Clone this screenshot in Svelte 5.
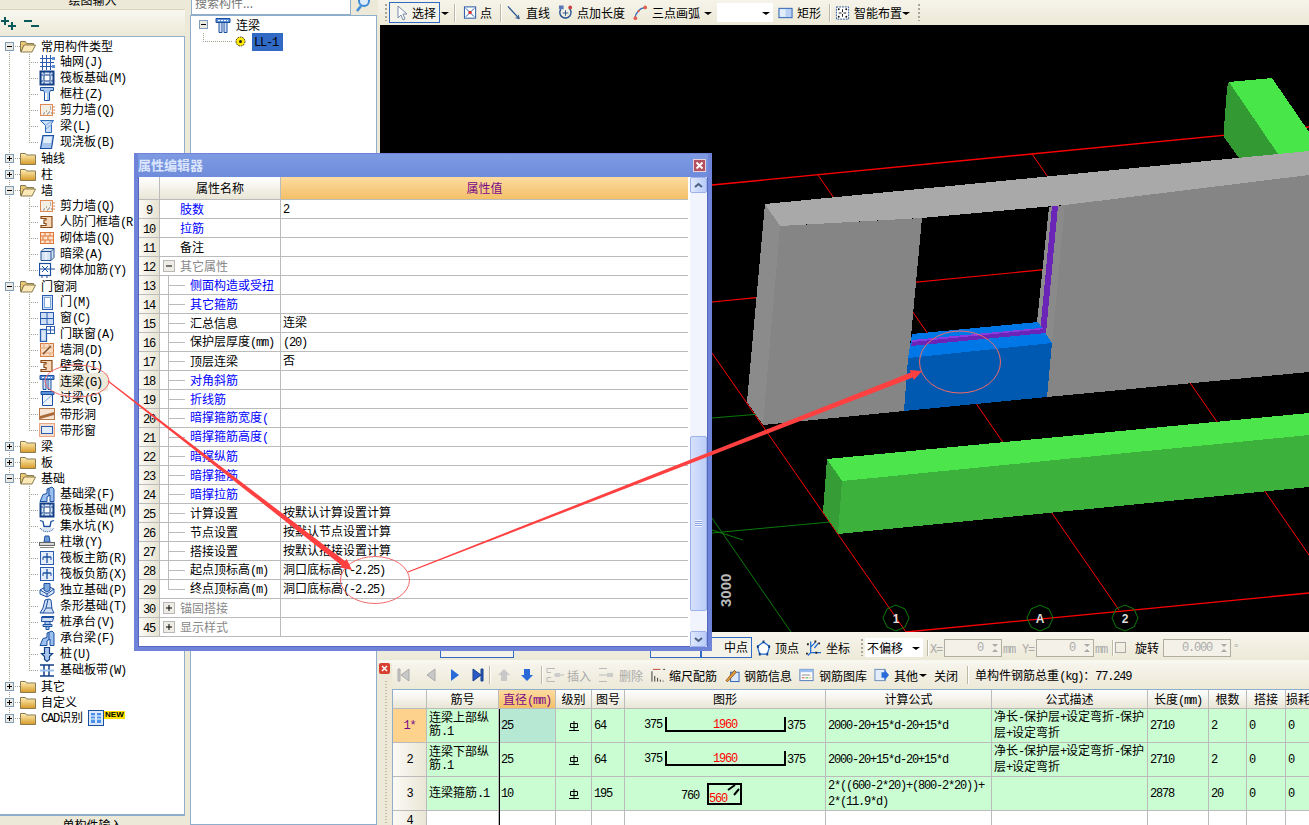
<script>
  const icons = {
    grid: '<path d="M1 4.5h14M1 8.5h14M1 12.5h14M3.5 1v15M7.5 1v15M11.5 1v15" stroke="#2a5db0" fill="none"/><path d="M13 3h3v3h-3zM13 11h3v3h-3z" fill="#5b8fd8"/>',
    raft: '<rect x="1.5" y="1.5" width="13" height="13" fill="#dbe8fa" stroke="#123f86" stroke-width="2"/><rect x="5" y="5" width="6" height="6" fill="#fff" stroke="#123f86"/><path d="M1 5h3M12 5h3M1 11h3M12 11h3M5 1v3M11 1v3M5 12v3M11 12v3" stroke="#123f86"/>',
    col: '<path d="M1.5 1.5h13v3h-3l-1 2v8h-5v-8l-1-2h-3z" fill="#a8c8f0" stroke="#1a4fa0"/><path d="M6 7h2v7H6z" fill="#fff"/>',
    shear: '<rect x="1.5" y="2.5" width="12" height="11" fill="#f3eee4" stroke="#dd8a55"/><path d="M5 11h1M7 9h1M9 11h1M11 7h1M10 10h1M8 12h1M12 11h1M4 12h1M11 5h1" stroke="#777"/><path d="M14 5h2M14 8h2M14 11h2" stroke="#dd8a55"/>',
    beam: '<path d="M1.5 2.5h13l-2 3v9h-6v-7z" fill="#c9ddf6" stroke="#2a6ab8"/><path d="M7 7l6-4M7 11l6-5" stroke="#7fa8dc"/>',
    slab: '<path d="M4 1.5h10.5l-2 13H1.5z" fill="#a8c6ee" stroke="#1a4fa0" stroke-width="1.2"/><path d="M5 3h8l-1 6H4z" fill="#e4effc"/>',
    frame: '<path d="M2 2.5h11v11H2v-2h5v-2H5V6h2V4.500H2z" fill="#f6d8b8" stroke="#8a4a18" stroke-width="1.2"/>',
    brick: '<rect x="1.500" y="2.500" width="13" height="11" fill="#fbe3cc" stroke="#e0773a"/><path d="M1 6h14M1 10h14M6 2v4M11 2v4M4 6v4M9 6v4M6 10v4M11 10v4" stroke="#e0773a"/>',
    hidden: '<path d="M2 5.500l3-3h10v9l-3 3H2z" fill="#d5e3f4" stroke="#24528f"/><path d="M2 5.500h10v9M12 5.500l3-3" stroke="#24528f" fill="none"/><path d="M7 6v8" stroke="#fff"/>',
    rebar: '<rect x="0.500" y="1.500" width="11" height="12" fill="#fff" stroke="#1a4fa0" stroke-width="1.2"/><path d="M0 7h16M3 4l6 6M9 4l-6 6M8 13v3M3 13v3" stroke="#1a4fa0"/>',
    door: '<rect x="3.500" y="1.500" width="10" height="14" fill="#cfe0f6" stroke="#2a5db0"/><rect x="5.500" y="3.500" width="6" height="10" fill="#fff" stroke="#7fa8dc"/>',
    win: '<rect x="1.500" y="2.500" width="13" height="12" fill="#cfe0f6" stroke="#2a5db0"/><path d="M8 2v13M1 8.500h14" stroke="#2a5db0"/>',
    doorwin: '<rect x="1.500" y="3.500" width="6" height="12" fill="#d9e7f8" stroke="#2a5db0" stroke-width="1.300"/><rect x="7.500" y="0.500" width="8" height="7" fill="#fff" stroke="#2a5db0"/><path d="M11.500 1v6M8 4h7" stroke="#2a5db0"/>',
    hole: '<rect x="1.500" y="1.500" width="13" height="13" fill="#f6dcc4" stroke="#d87a40"/><path d="M1 6h14M1 11h14M5 1v5M10 1v5M5 11v4M11 11v4" stroke="#e8a878"/><path d="M4 12l8-8" stroke="#7a4a28" stroke-width="1.500"/>',
    lintel: '<path d="M1 1.500h14v4H1z" fill="#5b8fd8" stroke="#1a4fa0"/><path d="M4 5.500h3v10H4zM9 5.500h3v10H9z" fill="#cfe0f6" stroke="#1a4fa0"/><path d="M3 3.500h10" stroke="#fff" stroke-dasharray="2 1"/>',
    over: '<path d="M2 1.500h13v3H2z" fill="#5b8fd8" stroke="#1a4fa0"/><path d="M3.500 4.500h10v11h-10z" fill="#eef4fc" stroke="#1a4fa0"/><path d="M4 13l9-8" stroke="#7fa8dc"/>',
    strip: '<rect x="0.500" y="2.500" width="15" height="11" fill="#f6e4d4" stroke="#b87a48"/><path d="M1 10l14-4v3L1 13z" fill="#a86a38"/>',
    stripwin: '<rect x="0.500" y="1.500" width="15" height="13" fill="#f8dccc" stroke="#e8a888"/><rect x="2.500" y="4.500" width="11" height="7" fill="#e4eefb" stroke="#2a5db0"/>',
    fbeam: '<path d="M1 15.500l3-7 4-1V3l5-2 2 2v12.500h-4V9l-3 2v4.500z" fill="#9cc0ee" stroke="#1a4fa0"/><path d="M10 2v8" stroke="#1a4fa0"/>',
    pit: '<path d="M1 2.500l3 1 1 5h6l1-5 3-1" fill="none" stroke="#1a4fa0" stroke-width="1.300"/><path d="M1 10c3 5 11 5 14 0" fill="#dce6f2" stroke="#1a4fa0" stroke-dasharray="1 1"/>',
    pier: '<path d="M6 2h4l1 6H5z" fill="#6f9ad8" stroke="#1a4fa0"/><rect x="0.500" y="8.500" width="15" height="3" fill="#d8d8d8" stroke="#666"/><path d="M1 13.500h14" stroke="#888"/>',
    mbar: '<rect x="1.500" y="1.500" width="13" height="13" fill="#e4eefb" stroke="#2a5db0"/><path d="M8 3v10M4 7h8" stroke="#1a4fa0" stroke-width="1.300"/><path d="M4 7v3M12 7v3" stroke="#1a4fa0"/>',
    iso: '<path d="M1 8l7-4 7 3v4l-7 4-7-3z" fill="#dbe8fa" stroke="#1a4fa0"/><path d="M5 1.500h6V8l-3 2-3-2z" fill="#7fa8dc" stroke="#1a4fa0"/><path d="M1 8l7 4 7-5M8 12v3" stroke="#1a4fa0" fill="none"/>',
    strp: '<path d="M6 2l4-1 2 1 1 9 2 4H1l3-5z" fill="#cfe0f6" stroke="#1a4fa0"/><path d="M9 1.500L7 10M4 15l3-5h6" fill="none" stroke="#1a4fa0"/>',
    cap: '<path d="M3 2.500h12l-1.500 5h-11z" fill="#cfe0f6" stroke="#1a4fa0"/><path d="M2 3.500h12" stroke="#1a4fa0"/><path d="M6 7.500h5v3H6zM4 10.500h9v2H4zM7 12.500h3v3H7z" fill="#a8c6ee" stroke="#1a4fa0"/>',
    pile: '<path d="M5.500 1.500h5v6h3l-3 3v3l-2.500 2-2.500-2v-3l-3-3h3z" fill="#a8c6ee" stroke="#123f86" stroke-width="1.200"/>',
    band: '<path d="M1 3h14M1 14h14" stroke="#123f86" stroke-width="1.500"/><path d="M5 3v11M10 3v11" stroke="#123f86" stroke-width="1.500"/><path d="M1 8.500h14" stroke="#9cc0ee" stroke-width="2"/>'
  };

  const groups = [
    { name: '常用构件类型', open: true, items: [['轴网(J)', 'grid'], ['筏板基础(M)', 'raft'], ['框柱(Z)', 'col'], ['剪力墙(Q)', 'shear'], ['梁(L)', 'beam'], ['现浇板(B)', 'slab']] },
    { name: '轴线' },
    { name: '柱' },
    { name: '墙', open: true, items: [['剪力墙(Q)', 'shear'], ['人防门框墙(R)', 'frame'], ['砌体墙(Q)', 'brick'], ['暗梁(A)', 'hidden'], ['砌体加筋(Y)', 'rebar']] },
    { name: '门窗洞', open: true, items: [['门(M)', 'door'], ['窗(C)', 'win'], ['门联窗(A)', 'doorwin'], ['墙洞(D)', 'hole'], ['壁龛(I)', 'frame'], ['连梁(G)', 'lintel', true], ['过梁(G)', 'over'], ['带形洞', 'strip'], ['带形窗', 'stripwin']] },
    { name: '梁' },
    { name: '板' },
    { name: '基础', open: true, items: [['基础梁(F)', 'fbeam'], ['筏板基础(M)', 'raft'], ['集水坑(K)', 'pit'], ['柱墩(Y)', 'pier'], ['筏板主筋(R)', 'mbar'], ['筏板负筋(X)', 'mbar'], ['独立基础(P)', 'iso'], ['条形基础(T)', 'strp'], ['桩承台(V)', 'cap'], ['承台梁(F)', 'fbeam'], ['桩(U)', 'pile'], ['基础板带(W)', 'band']] },
    { name: '其它' },
    { name: '自定义' },
    { name: 'CAD识别', isNew: true }
  ];

  // num, label, colour, value, kind: 0 plain, 1 child, 2 last child, 3 open group, 4 closed group
  const props = [
    [9, '肢数', 'blue', '2', 0],
    [10, '拉筋', 'blue', '', 0],
    [11, '备注', '', '', 0],
    [12, '其它属性', 'gray', '', 3],
    [13, '侧面构造或受扭', 'blue', '', 1],
    [14, '其它箍筋', 'blue', '', 1],
    [15, '汇总信息', '', '连梁', 1],
    [16, '保护层厚度(mm)', '', '(20)', 1],
    [17, '顶层连梁', '', '否', 1],
    [18, '对角斜筋', 'blue', '', 1],
    [19, '折线筋', 'blue', '', 1],
    [20, '暗撑箍筋宽度(', 'blue', '', 1],
    [21, '暗撑箍筋高度(', 'blue', '', 1],
    [22, '暗撑纵筋', 'blue', '', 1],
    [23, '暗撑箍筋', 'blue', '', 1],
    [24, '暗撑拉筋', 'blue', '', 1],
    [25, '计算设置', '', '按默认计算设置计算', 1],
    [26, '节点设置', '', '按默认节点设置计算', 1],
    [27, '搭接设置', '', '按默认搭接设置计算', 1],
    [28, '起点顶标高(m)', '', '洞口底标高(-2.25)', 1],
    [29, '终点顶标高(m)', '', '洞口底标高(-2.25)', 2],
    [30, '锚固搭接', 'gray', '', 4],
    [45, '显示样式', 'gray', '', 4]
  ];

  const heads = ['', '筋号', '直径(mm)', '级别', '图号', '图形', '计算公式', '公式描述', '长度(mm)', '根数', '搭接', '损耗(%)'];
  const desc = ['净长-保护层+设定弯折-保护', '层+设定弯折'];
  const rows = [
    { n: '1*', name: ['连梁上部纵', '筋.1'], d: '25', fig: '64', shape: 'u', f: ['2000-20+15*d-20+15*d'], desc, len: '2710', cnt: '2', active: true },
    { n: '2', name: ['连梁下部纵', '筋.1'], d: '25', fig: '64', shape: 'u', f: ['2000-20+15*d-20+15*d'], desc, len: '2710', cnt: '2' },
    { n: '3', name: ['连梁箍筋.1'], d: '10', fig: '195', shape: 'box', f: ['2*((600-2*20)+(800-2*20))+', '2*(11.9*d)'], desc: [], len: '2878', cnt: '20' }
  ];

  // latin runs are half width in the original font, so split them off
  function runs(s) {
    return (String(s).match(/[\x00-\x7f]+|[^\x00-\x7f]+/g) || []).map((p) => ({ p, lat: p.charCodeAt(0) < 128 }));
  }

  function arrow(x1, y1, x2, y2) {
    const len = Math.hypot(x2 - x1, y2 - y1);
    const ux = (x2 - x1) / len, uy = (y2 - y1) / len;
    const nx = -uy, ny = ux;
    const bx = x2 - ux * 11, by = y2 - uy * 11;
    const pt = (x, y, w) => `${(x + nx * w).toFixed(1)},${(y + ny * w).toFixed(1)}`;
    return [pt(x1, y1, 0.5), pt(bx, by, 2.8), pt(bx, by, 5.5), `${x2},${y2}`, pt(bx, by, -5.5), pt(bx, by, -2.8), pt(x1, y1, -0.5)].join(' ');
  }
</script>

{#snippet t(s)}{#each runs(s) as r}<span class:lat={r.lat}>{r.p}</span>{/each}{/snippet}

{#snippet lines(list)}
  <div class="lines">
    {#each list as l}<div>{@render t(l)}</div>{/each}
  </div>
{/snippet}

{#snippet box(open)}
  <span class="expander">
    <svg width="9" height="9" viewBox="0 0 9 9"><rect x="0.5" y="0.5" width="8" height="8" fill="#ece9e0" stroke="#7f9db9"/><path d={open ? 'M2 4.500h5' : 'M2 4.500h5M4.500 2v5'} stroke="#000"/></svg>
  </span>
{/snippet}

{#snippet folder(open)}
  <svg class="folder" width="16" height="14" viewBox="0 0 16 14">
    {#if open}
      <path d="M0.500 12.500v-10h5l1 2h7v2H4l-3 6z" fill="#e8c878" stroke="#8a7a50"/>
      <path d="M1 13h11l3.500-7H4z" fill="#fbeab8" stroke="#8a7a50"/>
    {:else}
      <path d="M0.500 13.500v-11h5l1 1.500h9v9.500z" fill="url(#fold)" stroke="#8a7a50"/>
    {/if}
  </svg>
{/snippet}

{#snippet tool(label, icon, cls = '')}
  <div class="tool {cls}">
    <svg width="15" height="16" viewBox="0 0 16 16">{@html icon}</svg>
    <span>{@render t(label)}</span>
  </div>
{/snippet}

<svg class="defs" width="0" height="0">
  <defs>
    <linearGradient id="fold" x1="0" y1="0" x2="0" y2="1"><stop offset="0" stop-color="#fff0b8"/><stop offset="1" stop-color="#d89a28"/></linearGradient>
  </defs>
</svg>

<div class="screen">
  <aside class="left">
    <div class="clip-top"><span>绘图输入</span></div>
    <div class="left-tools">
      <svg width="18" height="18" viewBox="0 0 18 18">
        <path d="M4 3v8M0 7h8M11 8v8M7 12h8" stroke="#0a5a5a" stroke-width="2" fill="none"/>
      </svg>
      <svg width="18" height="18" viewBox="0 0 18 18"><path d="M1 7h8M8 12h8" stroke="#0a5a5a" stroke-width="2"/></svg>
    </div>
    <div class="tree">
      <div class="tree-list">
        {#each groups as g}
          <div class="node">
            {@render box(g.open)}
            {@render folder(g.open)}
            <span class="node-label">{@render t(g.name)}</span>
            {#if g.isNew}
              <svg class="cad" width="16" height="16" viewBox="0 0 16 16"><rect x="0.500" y="0.500" width="15" height="15" fill="#dbe8fa" stroke="#1a4fa0"/><rect x="3" y="3" width="4" height="10" fill="#4a90e8"/><rect x="9" y="3" width="4" height="10" fill="#4a90e8"/><path d="M3 6h4M3 9h4M9 6h4M9 9h4" stroke="#fff"/></svg>
              <span class="new">NEW</span>
            {/if}
          </div>
          {#if g.items}
            {#each g.items as item, i}
              <div class="kid" class:last={i === g.items.length - 1}>
                <svg width="16" height="16" viewBox="0 0 16 16">{@html icons[item[1]]}</svg>
                <span class="kid-label" class:picked={item[2]}>{@render t(item[0])}</span>
              </div>
            {/each}
          {/if}
        {/each}
      </div>
    </div>
    <div class="clip-bottom"><span>单构件输入</span></div>
  </aside>

  <section class="mid">
    <div class="search">
      <div class="search-input"><span>搜索构件...</span></div>
      <div class="search-btn">
        <svg width="16" height="14" viewBox="0 0 16 14"><circle cx="9" cy="1" r="5" fill="#dcecfb" stroke="#3d8ad8" stroke-width="2"/><path d="M6 6l-4 5" stroke="#3d8ad8" stroke-width="2.500"/></svg>
      </div>
    </div>
    <div class="comp-tree">
      <div class="comp-row">
        {@render box(true)}
        <svg class="comp-icon" width="16" height="16" viewBox="0 0 16 16">{@html icons.lintel}</svg>
        <span>连梁</span>
      </div>
      <div class="comp-row sub">
        <svg width="11" height="11" viewBox="0 0 11 11"><circle cx="5.500" cy="5.500" r="4.500" fill="#ffe800" stroke="#222" stroke-dasharray="1.500 1"/><circle cx="5.500" cy="5.500" r="1.500" fill="#222"/></svg>
        <span class="selected">{@render t('LL-1')}</span>
      </div>
    </div>
  </section>

  <main class="right">
    <div class="topbar">
      <i class="grip"></i>
      <div class="tool active pick">
        <svg width="14" height="16" viewBox="0 0 14 16"><path d="M3 1v12l3-3 2 5 2-1-2-5h4z" fill="#fff" stroke="#7a8aa8"/></svg>
        <span>选择</span>
      </div>
      <i class="caret"></i>
      <i class="sep s1"></i>
      {@render tool('点', '<rect x="1.500" y="1.500" width="12" height="12" fill="#fff" stroke="#1a4fa0"/><path d="M3 3l9 9M12 3l-9 9" stroke="#1a4fa0"/><circle cx="7.500" cy="7.500" r="1.800" fill="#e03030"/>', 'g2')}
      <i class="sep s2"></i>
      {@render tool('直线', '<path d="M1 1l12 13" stroke="#24528f" stroke-width="1.300"/><path d="M13 14l-1-4M13 14l-4-1" stroke="#24528f"/>')}
      {@render tool('点加长度', '<path d="M3 4a6 6 0 1 0 9-1" fill="none" stroke="#24528f" stroke-width="1.500"/><path d="M5 8h6M8 5v6" stroke="#24528f"/><path d="M1 0h5v4H1z" fill="#5a7ab8"/><circle cx="13" cy="2" r="2" fill="#c84040"/>', 'ml2')}
      {@render tool('三点画弧', '<path d="M2 14C3 7 7 3 13 2" fill="none" stroke="#3a6ab8" stroke-width="1.500"/><circle cx="2.500" cy="13.500" r="2" fill="#e06050"/><circle cx="13" cy="2" r="2" fill="#e06050"/><circle cx="6" cy="6" r="1.200" fill="#e06050"/>', 'ml2')}
      <i class="caret"></i>
      <div class="combo"><i class="caret"></i></div>
      {@render tool('矩形', '<rect x="1" y="3" width="14" height="10" fill="#b8d0f4" stroke="#2a5db0"/><rect x="2" y="4" width="6" height="8" fill="#e4eefb"/>', 'ml2')}
      <i class="sep s3"></i>
      {@render tool('智能布置', '<rect x="1.500" y="1.500" width="13" height="13" fill="#fff" stroke="#24528f" stroke-dasharray="2 1"/><path d="M8 4v3M8 9v3M4 8h3M9 8h3" stroke="#111"/><circle cx="4" cy="4" r="1" fill="#111"/><circle cx="12" cy="4" r="1" fill="#111"/><circle cx="4" cy="12" r="1" fill="#111"/><circle cx="12" cy="12" r="1" fill="#111"/>')}
      <i class="caret back"></i>
      <i class="grip g-end"></i>
    </div>

    <svg class="scene" width="929" height="607" viewBox="380 25 929 607" shape-rendering="crispEdges">
      <g stroke="#ff0000" stroke-width="1" fill="none" shape-rendering="auto">
        <path d="M712 185L1309 127" stroke-width="1.400"/>
        <path d="M712 302L1309 244" stroke-width="1.200"/>
        <path d="M906 632L1309 593" stroke-width="1.400"/>
        <path d="M712 353L906 632"/>
        <path d="M818 175L1119 610"/>
        <path d="M1032 154L1309 555"/>
      </g>
      <g stroke="#0a7a0a" stroke-width="1" fill="none" shape-rendering="auto">
        <path d="M712 418L760 414M712 533L830 522M712 518L791 632M712 530L743 540"/>
      </g>
      <polygon points="1229,82 1272,78 1309,132 1309,160 1278,160" fill="#48e648"/>
      <polygon points="1229,82 1278,154 1239,158 1224,137 1224,128 1227,88" fill="#339933"/>

      <polygon points="765,204 1309,151 1309,175 1065,205 921,218 780,226" fill="#a9a9a9"/>
      <polygon points="765,204 780,226 763,425 747,402" fill="#8b8b8b"/>
      <polygon points="780,226 922,218 904,411 763,425" fill="#858585"/>
      <polygon points="1065,205 1309,175 1309,372 1047,397 1052,343" fill="#858585"/>
      <polygon points="1049,207 1065,205 1047,397 1045,343 1037,330" fill="#8a8a8a"/>
      <polygon points="1049,207 1052,206 1040,324 1037,322" fill="#8d8d8d"/>
      <polygon points="1052,206 1058,206 1046,333 1040,333" fill="#6a24b8"/>
      <polygon points="1058,206 1065,205 1052,343 1046,333" fill="#8a8a8a"/>

      <polygon points="912,334 1038,322 1052,343 908,358" fill="#0077e6"/>
      <polygon points="908,358 1052,343 1047,397 904,411" fill="#0059b0"/>
      <polygon points="912,342 1045,329 1046,333 911,346" fill="#6a24b8"/>
      <polygon points="912,340 1040,328 1045,329 912,342" fill="#8a3ce0"/>

      <polygon points="827,459 1309,413 1309,435 842,481" fill="#4ce64c"/>
      <polygon points="842,481 1309,435 1309,487 838,534" fill="#3cb13c"/>
      <polygon points="827,459 842,481 838,534 823,512" fill="#369d36"/>

      <g shape-rendering="auto">
        <polygon points="896,605 905,609 909,618 905,627 896,631 887,627 883,618 887,609" fill="none" stroke="#0a7a0a"/>
        <polygon points="1040,605 1049,609 1053,618 1049,627 1040,631 1031,627 1027,618 1031,609" fill="none" stroke="#0a7a0a"/>
        <polygon points="1125,605 1134,609 1138,618 1134,627 1125,631 1116,627 1112,618 1116,609" fill="none" stroke="#0a7a0a"/>
        <text class="axis" x="896" y="623">1</text>
        <text class="axis" x="1040" y="623">A</text>
        <text class="axis" x="1125" y="623">2</text>
        <text class="dim" transform="translate(731,607) rotate(-90)">3000</text>
      </g>
    </svg>

    <div class="snapbar">
      <div class="tabbtn t1"></div>
      <div class="tabbtn t2"></div>
      <div class="tabbtn t3 active">
        <span>中点</span>
      </div>
      {@render tool('顶点', '<path d="M8 1.500l6.500 5-2.500 8H4L1.500 6.500z" fill="#fff" stroke="#1a6ad0" stroke-width="1.300"/><path d="M7 0h2v3H7zM1 5h2v3H1zM13 5h2v3h-2zM3 13h2v3H3zM11 13h2v3h-2z" fill="#123f86"/>', 'ml1')}
      {@render tool('坐标', '<path d="M5 1v12h11M5 13L2 16M5 7l5-5M9 8l4-5" stroke="#1a6ad0" fill="none" stroke-width="1.300"/><path d="M1 3h2v2H1zM9 0h2v2H9zM13 2h2v2h-2zM0 13h2v2H0zM10 12h2v2h-2z" fill="#222"/>', 'ml1 g5')}
      <i class="grip g-snap"></i>
      <div class="combo offset"><span>不偏移</span><i class="caret"></i></div>
      <i class="sep s4"></i>
      <span class="dimmed x-label">{@render t('X=')}</span>
      <div class="spin"><span class="lat">0</span><i></i></div>
      <span class="dimmed">{@render t('mm')}</span>
      <span class="dimmed y-label">{@render t('Y=')}</span>
      <div class="spin"><span class="lat">0</span><i></i></div>
      <span class="dimmed">{@render t('mm')}</span>
      <i class="sep s5"></i>
      <i class="check"></i>
      <span class="rotate">旋转</span>
      <div class="spin wide"><span class="lat">0.000</span><i></i></div>
      <span class="dimmed deg">°</span>
    </div>

    <div class="rebar-wrap">
      <div class="rail">
        <svg width="11" height="11" viewBox="0 0 11 11"><rect width="11" height="11" rx="2" fill="#d84030"/><path d="M3 3l5 5M8 3l-5 5" stroke="#fff" stroke-width="1.500"/></svg>
      </div>
      <div class="rebar-main">
        <div class="rebar-bar">
          <svg class="nav" width="92" height="16" viewBox="0 0 92 16">
            <path d="M2 2h2v12H2zM13 2v12L5 8z" fill="#c8c8c8" stroke="#aaa"/>
            <path d="M39 2v12l-8-6z" fill="#c8c8c8" stroke="#aaa"/>
            <path d="M55 2v12l8-6z" fill="#2a6ad8"/>
            <path d="M77 2v12l8-6zM85 2h2v12h-2z" fill="#2a5ac8" stroke="#123f86"/>
          </svg>
          <i class="sep s6"></i>
          <svg class="nav2" width="43" height="16" viewBox="0 0 43 16">
            <path d="M7 2L1 8h3v6h6V8h3z" fill="#c8c8c8"/><path d="M30 14l6-6h-3V2h-6v6h-3z" fill="#2a6ad8"/>
          </svg>
          <i class="sep s7"></i>
          <div class="tool off"><svg width="20" height="16" viewBox="0 0 20 16"><path d="M1 1.500h8M1 1.500v4h4M1 14.500h8M1 14.500v-4h4M8 8h10" fill="none" stroke="#bbb"/><rect x="9" y="6" width="5" height="4" fill="#ccc"/></svg><span>插入</span></div>
          <div class="tool off"><svg width="20" height="16" viewBox="0 0 20 16"><path d="M1 1.500h8M1 14.500h8M1 8h12" fill="none" stroke="#bbb"/><rect x="9" y="6" width="6" height="4" fill="#ccc"/></svg><span>删除</span></div>
          {@render tool('缩尺配筋', '<path d="M1 15V4M4 15v-6M7 15v-4M10 15v-2M13 15v-1" stroke="#333"/><path d="M2 2h8" stroke="#c04030"/><path d="M13 2h2" stroke="#333"/>', 'tl')}
          {@render tool('钢筋信息', '<rect x="6" y="5" width="9" height="10" fill="#dbe8fa" stroke="#2a5db0"/><path d="M1 14L10 3l2 2-9 10z" fill="#e8a040" stroke="#8a5a20"/>', 'ml2')}
          {@render tool('钢筋图库', '<rect x="1" y="2" width="14" height="12" fill="#fff" stroke="#4a78b8"/><rect x="1" y="2" width="14" height="3" fill="#9cc0ee"/><path d="M3 8h9" stroke="#888"/><path d="M3 11h3" stroke="#d04030"/><path d="M7 11h3" stroke="#40a040"/><path d="M11 11h2" stroke="#d0a030"/>', 'ml1 g5')}
          {@render tool('其他', '<rect x="1" y="2" width="11" height="12" fill="#e4eefb" stroke="#6a8ab8"/><path d="M8 5h3V2l5 6-5 6v-3H8z" fill="#2a6ad8"/>', 'ml1 g5')}
          <i class="caret back2"></i>
          <span class="close-btn">关闭</span>
          <i class="sep s8"></i>
          <span class="total">{@render t('单构件钢筋总重(kg)：77.249')}</span>
        </div>

        <div class="rgrid">
          {#each heads as h, i}
            <div class="rh" class:on={i === 2}>{@render t(h)}</div>
          {/each}
          {#each rows as r}
            <div class="rnum" class:on={r.active}>{@render t(r.n)}</div>
            <div class="rc">{@render lines(r.name)}</div>
            <div class="rc" class:sel={r.active}>{@render t(r.d)}</div>
            <div class="rc mid-c">
              <svg width="12" height="12" viewBox="0 0 12 12"><path d="M2.500 3.500h7v4h-7zM6 1v10M1 10.500h10" fill="none" stroke="#000"/></svg>
            </div>
            <div class="rc">{@render t(r.fig)}</div>
            <div class="rc fig">
              {#if r.shape === 'u'}
                <svg width="200" height="33" viewBox="0 0 200 33">
                  <text class="fnum" x="19" y="19">375</text>
                  <path d="M41 8v14h119V8" fill="none" stroke="#000" stroke-width="2"/>
                  <text class="fnum red" x="100" y="19" text-anchor="middle">1960</text>
                  <text class="fnum" x="162" y="20">375</text>
                </svg>
              {:else}
                <svg width="200" height="33" viewBox="0 0 200 33">
                  <text class="fnum" x="56" y="22">760</text>
                  <rect x="83" y="7" width="33" height="20" fill="none" stroke="#000" stroke-width="2"/>
                  <path d="M103 13l7-5M109 18l5-6" stroke="#000" stroke-width="2" fill="none"/>
                  <text class="fnum red" x="84" y="25">560</text>
                </svg>
              {/if}
            </div>
            <div class="rc">{@render lines(r.f)}</div>
            <div class="rc">{@render lines(r.desc)}</div>
            <div class="rc">{@render t(r.len)}</div>
            <div class="rc">{@render t(r.cnt)}</div>
            <div class="rc">{@render t('0')}</div>
            <div class="rc">{@render t('0')}</div>
          {/each}
          <div class="rnum">{@render t('4')}</div>
          {#each Array(11) as _}
            <div class="rc blank"></div>
          {/each}
        </div>
        <i class="freeze"></i>
      </div>
    </div>
  </main>

  <div class="dialog">
    <div class="title">
      <span>属性编辑器</span>
      <i class="x">
        <svg width="13" height="13" viewBox="0 0 13 13"><rect x="0.500" y="0.500" width="12" height="12" fill="#b5505f" stroke="#e8d0d8"/><path d="M3.500 3.500l6 6M9.500 3.500l-6 6" stroke="#fff" stroke-width="1.800"/></svg>
      </i>
    </div>
    <div class="dlg-body">
      <div class="pgrid">
        <div class="ph"></div>
        <div class="ph">属性名称</div>
        <div class="ph on">属性值</div>
        {#each props as p}
          <div class="pn">{@render t(p[0])}</div>
          <div class="pl {p[2]}" class:child={p[4] === 1 || p[4] === 2} class:end={p[4] === 2} class:grp={p[4] > 2}>
            {#if p[4] > 2}
              <svg class="pbox" width="12" height="12" viewBox="0 0 12 12"><rect x="0.500" y="0.500" width="11" height="11" fill="#eeece4" stroke="#b8b8b8"/><path d={p[4] === 3 ? 'M3 6h6' : 'M3 6h6M6 3v6'} stroke="#000"/></svg>
            {/if}
            <span>{@render t(p[1])}</span>
          </div>
          <div class="pv">{@render t(p[3])}</div>
        {/each}
      </div>
      <div class="sbar">
        <div class="sb-btn"><svg width="9" height="7" viewBox="0 0 9 7"><path d="M1 5l3.500-3L8 5" fill="none" stroke="#4d6185" stroke-width="2"/></svg></div>
        <div class="sb-thumb"><i></i></div>
        <div class="sb-btn"><svg width="9" height="7" viewBox="0 0 9 7"><path d="M1 2l3.500 3L8 2" fill="none" stroke="#4d6185" stroke-width="2"/></svg></div>
      </div>
    </div>
  </div>

  <svg class="notes" width="1309" height="825" viewBox="0 0 1309 825">
    <ellipse cx="77" cy="381" rx="32" ry="16" class="ring"/>
    <ellipse cx="375" cy="580" rx="34.500" ry="23.500" class="ring"/>
    <ellipse cx="960" cy="362" rx="40.500" ry="31" class="ring"/>
    <polygon points={arrow(108, 381, 352, 570)} class="shot"/>
    <polygon points={arrow(408, 572, 922, 371)} class="shot"/>
  </svg>
</div>

<style>
  :global(body) {
    margin: 0;
    background: #ece9d8;
  }

  .screen {
    position: relative;
    display: flex;
    width: 1309px;
    height: 825px;
    overflow: hidden;
    background: #ece9d8;
    font-family: "Noto Sans CJK SC", "Liberation Sans", sans-serif;
    font-size: 12px;
    color: #000;
  }

  .lat {
    font-family: "Liberation Mono", monospace;
    letter-spacing: -1.2px;
    white-space: pre;
  }

  .defs {
    position: absolute;
  }

  /* left panel */
  .left {
    display: flex;
    flex-direction: column;
    width: 190px;
    height: 825px;
    flex: none;
  }

  .clip-top {
    width: 185px;
    height: 9px;
    overflow: hidden;
    display: flex;
    justify-content: center;
    align-items: flex-end;
    background: #ece9d8;
    border-bottom: 1px solid #d8d4c0;
  }

  .clip-top span {
    line-height: 18px;
    height: 9px;
    margin-top: -9px;
    display: block;
    transform: translateY(-9px);
  }

  .left-tools {
    display: flex;
    align-items: center;
    gap: 4px;
    height: 26px;
    width: 185px;
    padding-left: 1px;
    box-sizing: border-box;
    background: linear-gradient(#f8f7f0, #ece9d8);
  }

  .tree {
    flex: 1;
    width: 185px;
    box-sizing: border-box;
    background: #fff;
    border-top: 1px solid #8faecb;
    border-right: 1px solid #8faecb;
    border-bottom: 2px solid #8faecb;
    padding-top: 1px;
    overflow: hidden;
  }

  .tree-list {
    background: repeating-linear-gradient(to bottom, #a0a090 0 1px, transparent 1px 2px) 9px 8px / 1px 672px no-repeat;
  }

  .node {
    display: flex;
    align-items: center;
    height: 16px;
    padding-left: 5px;
    background: repeating-linear-gradient(to right, #a0a090 0 1px, transparent 1px 2px) 13px 8px / 8px 1px no-repeat;
  }

  .expander {
    display: flex;
    width: 9px;
    height: 9px;
  }

  .folder {
    margin-left: 6px;
    flex: none;
  }

  .node-label {
    margin: -2px 0 0 5px;
    white-space: nowrap;
  }

  .cad {
    margin-left: 5px;
  }

  .new {
    font-family: "Liberation Sans", sans-serif;
    font-size: 8px;
    font-weight: bold;
    line-height: 8px;
    padding: 0 1px;
    background: #ffe000;
    margin-bottom: 6px;
  }

  .kid {
    display: flex;
    align-items: center;
    gap: 4px;
    height: 16px;
    padding-left: 39px;
    white-space: nowrap;
    background:
      repeating-linear-gradient(to bottom, #a0a090 0 1px, transparent 1px 2px) 29px 0 / 1px 100% no-repeat,
      repeating-linear-gradient(to right, #a0a090 0 1px, transparent 1px 2px) 29px 8px / 10px 1px no-repeat;
  }

  .kid.last {
    background:
      repeating-linear-gradient(to bottom, #a0a090 0 1px, transparent 1px 2px) 29px 0 / 1px 50% no-repeat,
      repeating-linear-gradient(to right, #a0a090 0 1px, transparent 1px 2px) 29px 8px / 10px 1px no-repeat;
  }

  .kid svg {
    flex: none;
  }

  .kid-label {
    padding-left: 1px;
    line-height: 15px;
    margin-top: -1px;
  }

  .kid-label.picked {
    background: #ece9d8;
    padding-right: 6px;
  }

  .clip-bottom {
    width: 185px;
    height: 9px;
    overflow: hidden;
    text-align: center;
    line-height: 18px;
    background: #ece9d8;
  }

  /* component list */
  .mid {
    display: flex;
    flex-direction: column;
    width: 188px;
    flex: none;
  }

  .search {
    display: flex;
    height: 15px;
    padding-left: 1px;
  }

  .search-input {
    width: 160px;
    background: #fff;
    border: 1px solid #8faecb;
    border-top: 0;
    box-sizing: border-box;
    overflow: hidden;
    color: #777;
    padding-left: 3px;
  }

  .search-input span {
    display: block;
    line-height: 12px;
    transform: translateY(-3px);
  }

  .search-btn {
    width: 24px;
    display: flex;
    justify-content: center;
  }

  .comp-tree {
    flex: 1;
    width: 187px;
    box-sizing: border-box;
    background: #fff;
    border: 1px solid #8faecb;
    padding: 0 0 0 8px;
  }

  .comp-row {
    display: flex;
    align-items: center;
    height: 17px;
  }

  .comp-row > span:last-child {
    margin-top: -1px;
  }

  .comp-icon {
    margin: 0 5px 0 7px;
  }

  .comp-row.sub {
    padding-left: 36px;
    gap: 6px;
    background:
      repeating-linear-gradient(to bottom, #a0a090 0 1px, transparent 1px 2px) 4px 0 / 1px 50% no-repeat,
      repeating-linear-gradient(to right, #a0a090 0 1px, transparent 1px 2px) 4px 8px / 30px 1px no-repeat;
  }

  .comp-row.sub > span:last-child {
    margin-top: 1px;
  }

  .selected {
    background: #316ac5;
    padding: 0 3px 0 2px;
    line-height: 16px;
    width: 26px;
  }

  /* right side */
  .right {
    display: flex;
    flex-direction: column;
    flex: 1;
    min-width: 0;
  }

  .topbar {
    display: flex;
    align-items: center;
    height: 25px;
    padding-left: 7px;
    background: linear-gradient(#f6f4ea, #ece9d8);
    white-space: nowrap;
    box-sizing: border-box;
  }

  .grip {
    width: 2px;
    height: 17px;
    flex: none;
    background: repeating-linear-gradient(to bottom, #a8a498 0 2px, transparent 2px 4px);
  }

  .g-end {
    margin-left: 7px;
  }

  .tool {
    display: flex;
    align-items: center;
    gap: 4px;
    padding: 0 3px;
    flex: none;
    white-space: nowrap;
  }

  .tool.g2 {
    gap: 2px;
  }

  .tool.g5 {
    gap: 5px;
  }

  .tool.ml1 {
    margin-left: 1px;
  }

  .tool.ml2 {
    margin-left: 2px;
  }

  .tool.active {
    border: 1px solid #316ac5;
    box-sizing: border-box;
    background: #f4f3ea;
  }

  .pick {
    width: 51px;
    height: 21px;
    margin-left: 2px;
    padding-left: 5px;
    gap: 3px;
  }

  .caret {
    width: 0;
    height: 0;
    flex: none;
    margin: 1px 1px 0;
    border: 4px solid transparent;
    border-top-color: #000;
    border-bottom-width: 0;
    border-top-width: 3px;
  }

  .caret.back {
    margin-left: -3px;
  }

  .sep {
    width: 1px;
    height: 18px;
    flex: none;
    background: #bcb8a4;
    box-shadow: 1px 0 0 #fff;
  }

  .s1 {
    margin: 0 5px 0 4px;
  }

  .s2 {
    margin: 0 3px 0 5px;
  }

  .s3 {
    margin: 0 2px 0 5px;
  }

  .combo {
    display: flex;
    align-items: center;
    justify-content: flex-end;
    width: 56px;
    height: 19px;
    margin-left: 4px;
    background: #fff;
    flex: none;
    box-sizing: border-box;
    padding-right: 2px;
  }

  .scene {
    display: block;
    flex: none;
    margin-left: 2px;
    background: #000;
  }

  .axis {
    font: bold 12px "Liberation Sans", sans-serif;
    fill: #ddd;
    text-anchor: middle;
  }

  .dim {
    font: bold 15px "Liberation Sans", sans-serif;
    fill: #bbb;
  }

  .snapbar {
    display: flex;
    align-items: center;
    height: 28px;
    padding-top: 3px;
    box-sizing: border-box;
    background: linear-gradient(#f7f5ec, #ece9d8);
    white-space: nowrap;
  }

  .tabbtn {
    height: 21px;
    box-sizing: border-box;
    border: 1px solid #316ac5;
    background: #f4f3ea;
    flex: none;
  }

  .t1 {
    width: 74px;
    margin-left: 62px;
  }

  .t2 {
    width: 51px;
    margin-left: 136px;
  }

  .t3 {
    width: 51px;
    text-align: right;
    padding-right: 3px;
    line-height: 18px;
  }

  .g-snap {
    margin-left: 8px;
  }

  .offset {
    width: 58px;
    margin-left: 2px;
    justify-content: space-between;
    padding-left: 2px;
  }

  .s4 {
    margin: 0 2px 0 4px;
    height: 16px;
  }

  .dimmed {
    color: #aaa;
  }

  .x-label {
    width: 14px;
  }

  .y-label {
    width: 14px;
    margin-left: 7px;
  }

  .spin {
    display: flex;
    align-items: center;
    justify-content: flex-end;
    width: 58px;
    height: 18px;
    flex: none;
    box-sizing: border-box;
    border: 1px solid #b0aea0;
    background: #f4f2e8;
    color: #aaa;
    margin-right: 1px;
    gap: 9px;
    padding-right: 3px;
  }

  .spin i {
    width: 0;
    height: 8px;
    border-left: 3px solid transparent;
    border-right: 3px solid transparent;
    background: none;
    border-top: 3px solid #aaa;
    border-bottom: 3px solid #aaa;
    box-sizing: border-box;
  }

  .spin.wide {
    width: 68px;
    margin-left: 4px;
  }

  .s5 {
    margin: 0 2px 0 5px;
    height: 16px;
  }

  .check {
    width: 11px;
    height: 11px;
    flex: none;
    border: 1px solid #aaa;
    box-sizing: border-box;
  }

  .rotate {
    margin-left: 9px;
  }

  .deg {
    margin-left: 2px;
  }

  .rebar-wrap {
    display: flex;
    flex: 1;
    min-height: 0;
    padding-top: 3px;
    background: #f8f7f0;
  }

  .rail {
    width: 14px;
    flex: none;
    padding-top: 0;
    background: repeating-linear-gradient(to bottom, #c0bca8 0 1px, transparent 1px 3px) 7px 18px / 2px 100% no-repeat, #ece9d8;
  }

  .rail svg {
    display: block;
    margin-left: 1px;
  }

  .rebar-main {
    position: relative;
    flex: 1;
    min-width: 0;
  }

  .rebar-bar {
    display: flex;
    align-items: center;
    height: 26px;
    padding: 0 0 2px 4px;
    box-sizing: border-box;
    background: linear-gradient(#f7f5ec, #ece9d8);
    white-space: nowrap;
  }

  .nav {
    flex: none;
  }

  .s6 {
    margin: 0 7px 0 1px;
  }

  .nav2 {
    flex: none;
  }

  .s7 {
    margin: 0 1px;
  }

  .tool.off {
    color: #aaa;
    gap: 1px;
    padding: 0 4px 0 3px;
  }

  .tool.tl {
    gap: 3px;
    margin-left: 1px;
  }

  .back2 {
    margin-left: -2px;
  }

  .close-btn {
    margin-left: 6px;
  }

  .s8 {
    margin: 0 7px 0 9px;
  }

  .rgrid {
    display: grid;
    grid-template-columns: 34px 72px 57px 36px 33px 201px 166px 156px 61px 38px 39px 40px;
    grid-template-rows: 19px 34px 34px 34px 20px;
    background: #fff;
    border-top: 1px solid #8faecb;
    border-left: 1px solid #8faecb;
    overflow: hidden;
  }

  .rh {
    background: linear-gradient(#fff, #e9e6d6);
    border-right: 1px solid #bbb;
    border-bottom: 1px solid #bbb;
    text-align: center;
    line-height: 17px;
    white-space: nowrap;
    overflow: hidden;
  }

  .rh.on {
    background: linear-gradient(#fddba0, #f3c068);
    color: #7a0a8a;
  }

  .rnum {
    background: linear-gradient(to right, #fbfaf5, #e9e6d6);
    border-right: 1px solid #bbb;
    border-bottom: 1px solid #bbb;
    display: flex;
    align-items: center;
    justify-content: center;
  }

  .rnum.on {
    background: #fdd28c;
    color: #7a0a8a;
  }

  .rc {
    background: #cbfdd3;
    border-right: 1px solid #bbb;
    border-bottom: 1px solid #bbb;
    display: flex;
    align-items: center;
    padding-left: 2px;
    overflow: hidden;
    box-sizing: border-box;
    white-space: nowrap;
  }

  .lines {
    line-height: 13px;
    padding-bottom: 2px;
  }

  .rc.sel {
    background: #b6e8d4;
  }

  .rc.mid-c {
    justify-content: center;
    padding: 0;
  }

  .rc.fig {
    padding: 0;
  }

  .rc.blank {
    background: #fff;
  }

  .fnum {
    font: 12px "Liberation Mono", monospace;
    letter-spacing: -1.2px;
    fill: #000;
  }

  .fnum.red {
    fill: #ff0000;
  }

  .freeze {
    position: absolute;
    left: 107px;
    top: 46px;
    bottom: 0;
    width: 1px;
    background: #000;
  }

  /* floating property editor */
  .dialog {
    position: absolute;
    left: 134px;
    top: 153px;
    width: 578px;
    height: 498px;
    box-sizing: border-box;
    background: #fff;
    border: 4px solid #6f83d8;
    border-top-width: 1px;
    box-shadow: inset 0 0 0 1px #5468c0;
    display: flex;
    flex-direction: column;
  }

  .title {
    display: flex;
    align-items: center;
    justify-content: space-between;
    height: 23px;
    flex: none;
    padding: 0 1px 2px 0;
    box-sizing: border-box;
    background: linear-gradient(#7d9ae2, #6f8cdc);
    color: #dbe5fb;
    font-weight: bold;
    font-size: 13px;
  }

  .x {
    display: flex;
    margin: 2px 1px 0 0;
  }

  .dlg-body {
    display: flex;
    flex: 1;
    min-height: 0;
    padding-left: 1px;
  }

  .pgrid {
    display: grid;
    grid-template-columns: 21px 121px 407px;
    grid-template-rows: 23px repeat(23, 19px);
    width: 549px;
    flex: none;
    align-self: flex-start;
  }

  .ph {
    background: linear-gradient(#fff, #e9e6d6);
    border-right: 1px solid #bbb;
    border-bottom: 1px solid #bbb;
    text-align: center;
    line-height: 21px;
  }

  .ph.on {
    background: linear-gradient(#fddba0, #f3c068);
    color: #7a0a8a;
    border-right: 0;
  }

  .pn {
    background: linear-gradient(to right, #fbfaf5, #e6e3d2);
    border-right: 1px solid #bbb;
    border-bottom: 1px solid #bbb;
    text-align: center;
    line-height: 18px;
    overflow: hidden;
  }

  .pl {
    display: flex;
    align-items: center;
    padding-left: 20px;
    border-right: 1px solid #bbb;
    border-bottom: 1px solid #bbb;
    white-space: nowrap;
    overflow: hidden;
  }

  .pl > span {
    margin-top: -2px;
  }

  .pl.child {
    padding-left: 30px;
    background:
      linear-gradient(#bbb, #bbb) 8px 0 / 1px 100% no-repeat,
      linear-gradient(#bbb, #bbb) 8px 9px / 17px 1px no-repeat;
  }

  .pl.child.end {
    background:
      linear-gradient(#bbb, #bbb) 8px 0 / 1px 50% no-repeat,
      linear-gradient(#bbb, #bbb) 8px 9px / 17px 1px no-repeat;
  }

  .pl.grp {
    padding-left: 3px;
    gap: 5px;
  }

  .pbox {
    flex: none;
  }

  .blue {
    color: #0000ff;
  }

  .gray {
    color: #888;
  }

  .pv {
    border-bottom: 1px solid #bbb;
    padding-left: 2px;
    line-height: 16px;
    white-space: nowrap;
    overflow: hidden;
  }

  .sbar {
    display: flex;
    flex-direction: column;
    width: 17px;
    margin-left: 2px;
    flex: none;
    background: #f1f4fd;
  }

  .sb-btn {
    height: 16px;
    flex: none;
    display: flex;
    align-items: center;
    justify-content: center;
    background: linear-gradient(to right, #dfe8fd, #b8cbf8);
    border: 1px solid #9cb1e8;
    border-radius: 2px;
    box-sizing: border-box;
  }

  .sb-thumb {
    margin: 243px 0 20px;
    flex: 1;
    background: linear-gradient(to right, #d6e1fc, #bccdf8);
    border: 1px solid #9cb1e8;
    border-radius: 2px;
    display: flex;
    align-items: center;
    justify-content: center;
  }

  .sb-thumb i {
    width: 7px;
    height: 7px;
    background: repeating-linear-gradient(to bottom, #eef3ff 0 1px, #8ca4e0 1px 2px);
  }

  .notes {
    position: absolute;
    left: 0;
    top: 0;
    pointer-events: none;
  }

  .ring {
    fill: none;
    stroke: #f06a6a;
    stroke-width: 1;
  }

  .shot {
    fill: #ff4040;
  }
</style>
